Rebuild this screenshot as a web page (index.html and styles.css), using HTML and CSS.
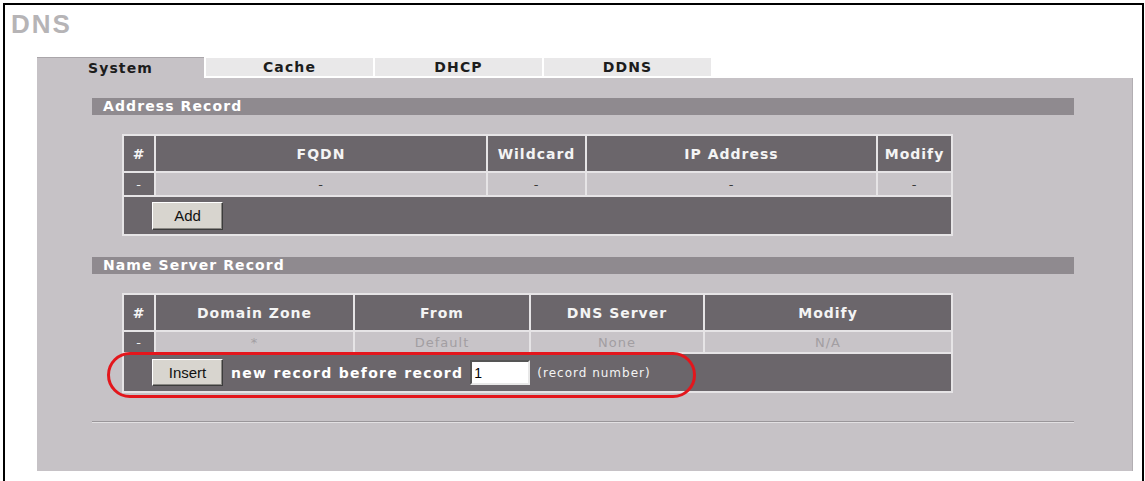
FILE: index.html
```html
<!DOCTYPE html>
<html>
<head>
<meta charset="utf-8">
<title>DNS</title>
<link rel="stylesheet" href="styles.css">
</head>
<body>
<div class="frame">
  <div class="title">DNS</div>
  <div class="tabs">
    <div class="tab active">System</div>
    <div class="tab">Cache</div>
    <div class="tab">DHCP</div>
    <div class="tab">DDNS</div>
  </div>
  <div class="panel">
    <div class="bar">Address Record</div>
    <div class="table-wrap">
      <table class="grid">
        <colgroup><col class="c30"><col class="c330"><col class="c97"><col class="c289"><col class="c73"></colgroup>
        <tr class="head"><th>#</th><th>FQDN</th><th>Wildcard</th><th>IP Address</th><th>Modify</th></tr>
        <tr class="data"><td class="idx">-</td><td>-</td><td>-</td><td>-</td><td>-</td></tr>
        <tr class="action"><td colspan="5"><button class="btn">Add</button></td></tr>
      </table>
    </div>

    <div class="bar bar-second">Name Server Record</div>
    <div class="table-wrap">
      <table class="grid grid-ns">
        <colgroup><col class="c30"><col class="c197"><col class="c174"><col class="c172"><col class="c246"></colgroup>
        <tr class="head"><th>#</th><th>Domain Zone</th><th>From</th><th>DNS Server</th><th>Modify</th></tr>
        <tr class="data faded"><td class="idx">-</td><td>*</td><td>Default</td><td>None</td><td>N/A</td></tr>
        <tr class="action insert"><td colspan="5"><div class="insert-line"><button class="btn btn-insert">Insert</button><span class="ins-text">new record before record</span><input class="rec-input" type="text" value="1"><span class="hint">(record number)</span></div></td></tr>
      </table>
      <div class="highlight"></div>
    </div>
    <div class="rule"></div>
  </div>
</div>
</body>
</html>
```

FILE: styles.css
```css
html, body {
  margin: 0;
  padding: 0;
  overflow: hidden;
  background: #ffffff;
}

.frame {
  margin: 3px 0 0 3px;
  width: 1137px;
  height: 476px;
  border: 2px solid #000;
  border-bottom: none;
  background: #ffffff;
}

.title {
  margin: 6px 0 0 6px;
  font-family: "Liberation Sans", Arial, sans-serif;
  font-weight: bold;
  font-size: 26px;
  letter-spacing: 2px;
  line-height: 26px;
  color: #b6b4b6;
}

.tabs {
  display: flex;
  align-items: flex-start;
  gap: 2px;
  margin: 20px 0 0 32px;
  height: 21px;
}

.tab {
  width: 167px;
  height: 18px;
  margin-top: 1px;
  background: #e9e8e9;
  font-family: "DejaVu Sans", Verdana, sans-serif;
  font-weight: bold;
  font-size: 14px;
  letter-spacing: 1.1px;
  line-height: 18px;
  text-align: center;
  color: #1c1c1c;
}

.tab.active {
  height: 20px;
  margin-top: 0;
  line-height: 21px;
  background: #c6c2c6;
  border-top: 1px solid #aaa6aa;
}

.panel {
  position: relative;
  margin-left: 32px;
  width: 1096px;
  height: 393px;
  box-sizing: border-box;
  padding: 20px 58px 0 55px;
  background: #c6c2c6;
  border-right: 1px solid #b2aeb2;
}

.bar {
  height: 17px;
  padding-left: 11px;
  background: #8f8a8f;
  color: #ffffff;
  font-family: "DejaVu Sans", Verdana, sans-serif;
  font-weight: bold;
  font-size: 14px;
  letter-spacing: 1.1px;
  line-height: 17px;
}

.bar-second {
  margin-top: 21px;
}

.table-wrap {
  position: relative;
  margin: 19px 0 0 30px;
  width: 831px;
}

.grid {
  width: 831px;
  table-layout: fixed;
  border-collapse: separate;
  border-spacing: 2px;
  background: #e6e4e6;
  font-family: "DejaVu Sans", Verdana, sans-serif;
}

.c30 { width: 30px; }
.c330 { width: 330px; }
.c97 { width: 97px; }
.c289 { width: 289px; }
.c73 { width: 73px; }
.c197 { width: 197px; }
.c174 { width: 174px; }
.c172 { width: 172px; }
.c246 { width: 246px; }

.grid th, .grid td {
  padding: 0;
  text-align: center;
  vertical-align: middle;
}

.head th {
  height: 35px;
  background: #6b666b;
  color: #f4f4f4;
  font-weight: bold;
  font-size: 14px;
  letter-spacing: 1px;
}

.data td {
  height: 22px;
  background: #c8c4c8;
  color: #3a3a3a;
  font-size: 13px;
  letter-spacing: 1px;
}

.data td.idx {
  background: #6b666b;
  color: #f0f0f0;
}

.grid-ns .data td {
  height: 20px;
}

.faded td {
  color: #a29ea2;
}

.action td {
  height: 37px;
  background: #6b666b;
  text-align: left;
  padding-left: 28px;
}

.btn {
  display: block;
  width: 71px;
  height: 28px;
  padding: 0;
  margin: 0;
  background: #d8d5cf;
  border: 1px solid;
  border-color: #ffffff #3c3c3c #3c3c3c #ffffff;
  box-shadow: inset -1px -1px 0 #8a8884;
  font-family: "Liberation Sans", Arial, sans-serif;
  font-size: 15px;
  color: #111111;
}

.btn-insert {
  height: 27px;
}

.insert-line {
  display: flex;
  align-items: center;
}

.ins-text {
  margin-left: 8px;
  color: #ffffff;
  font-weight: bold;
  font-size: 14px;
  letter-spacing: 1.3px;
}

.rec-input {
  margin-left: 7px;
  width: 60px;
  height: 25px;
  box-sizing: border-box;
  padding: 1px 2px;
  border: 2px solid;
  border-color: #555555 #e8e8e8 #e8e8e8 #555555;
  background: #ffffff;
  font-family: "Liberation Sans", Arial, sans-serif;
  font-size: 14px;
  color: #000;
}

.hint {
  margin-left: 7px;
  color: #f4f4f4;
  font-size: 12px;
  letter-spacing: 1px;
}

.highlight {
  position: absolute;
  left: -15px;
  top: 59px;
  width: 589px;
  height: 46px;
  box-sizing: border-box;
  border: 3px solid #e3161c;
  border-radius: 23px;
  pointer-events: none;
}

.rule {
  margin-top: 28px;
  border-top: 1px solid #9a969a;
  border-bottom: 1px solid #e2e0e2;
}
```
